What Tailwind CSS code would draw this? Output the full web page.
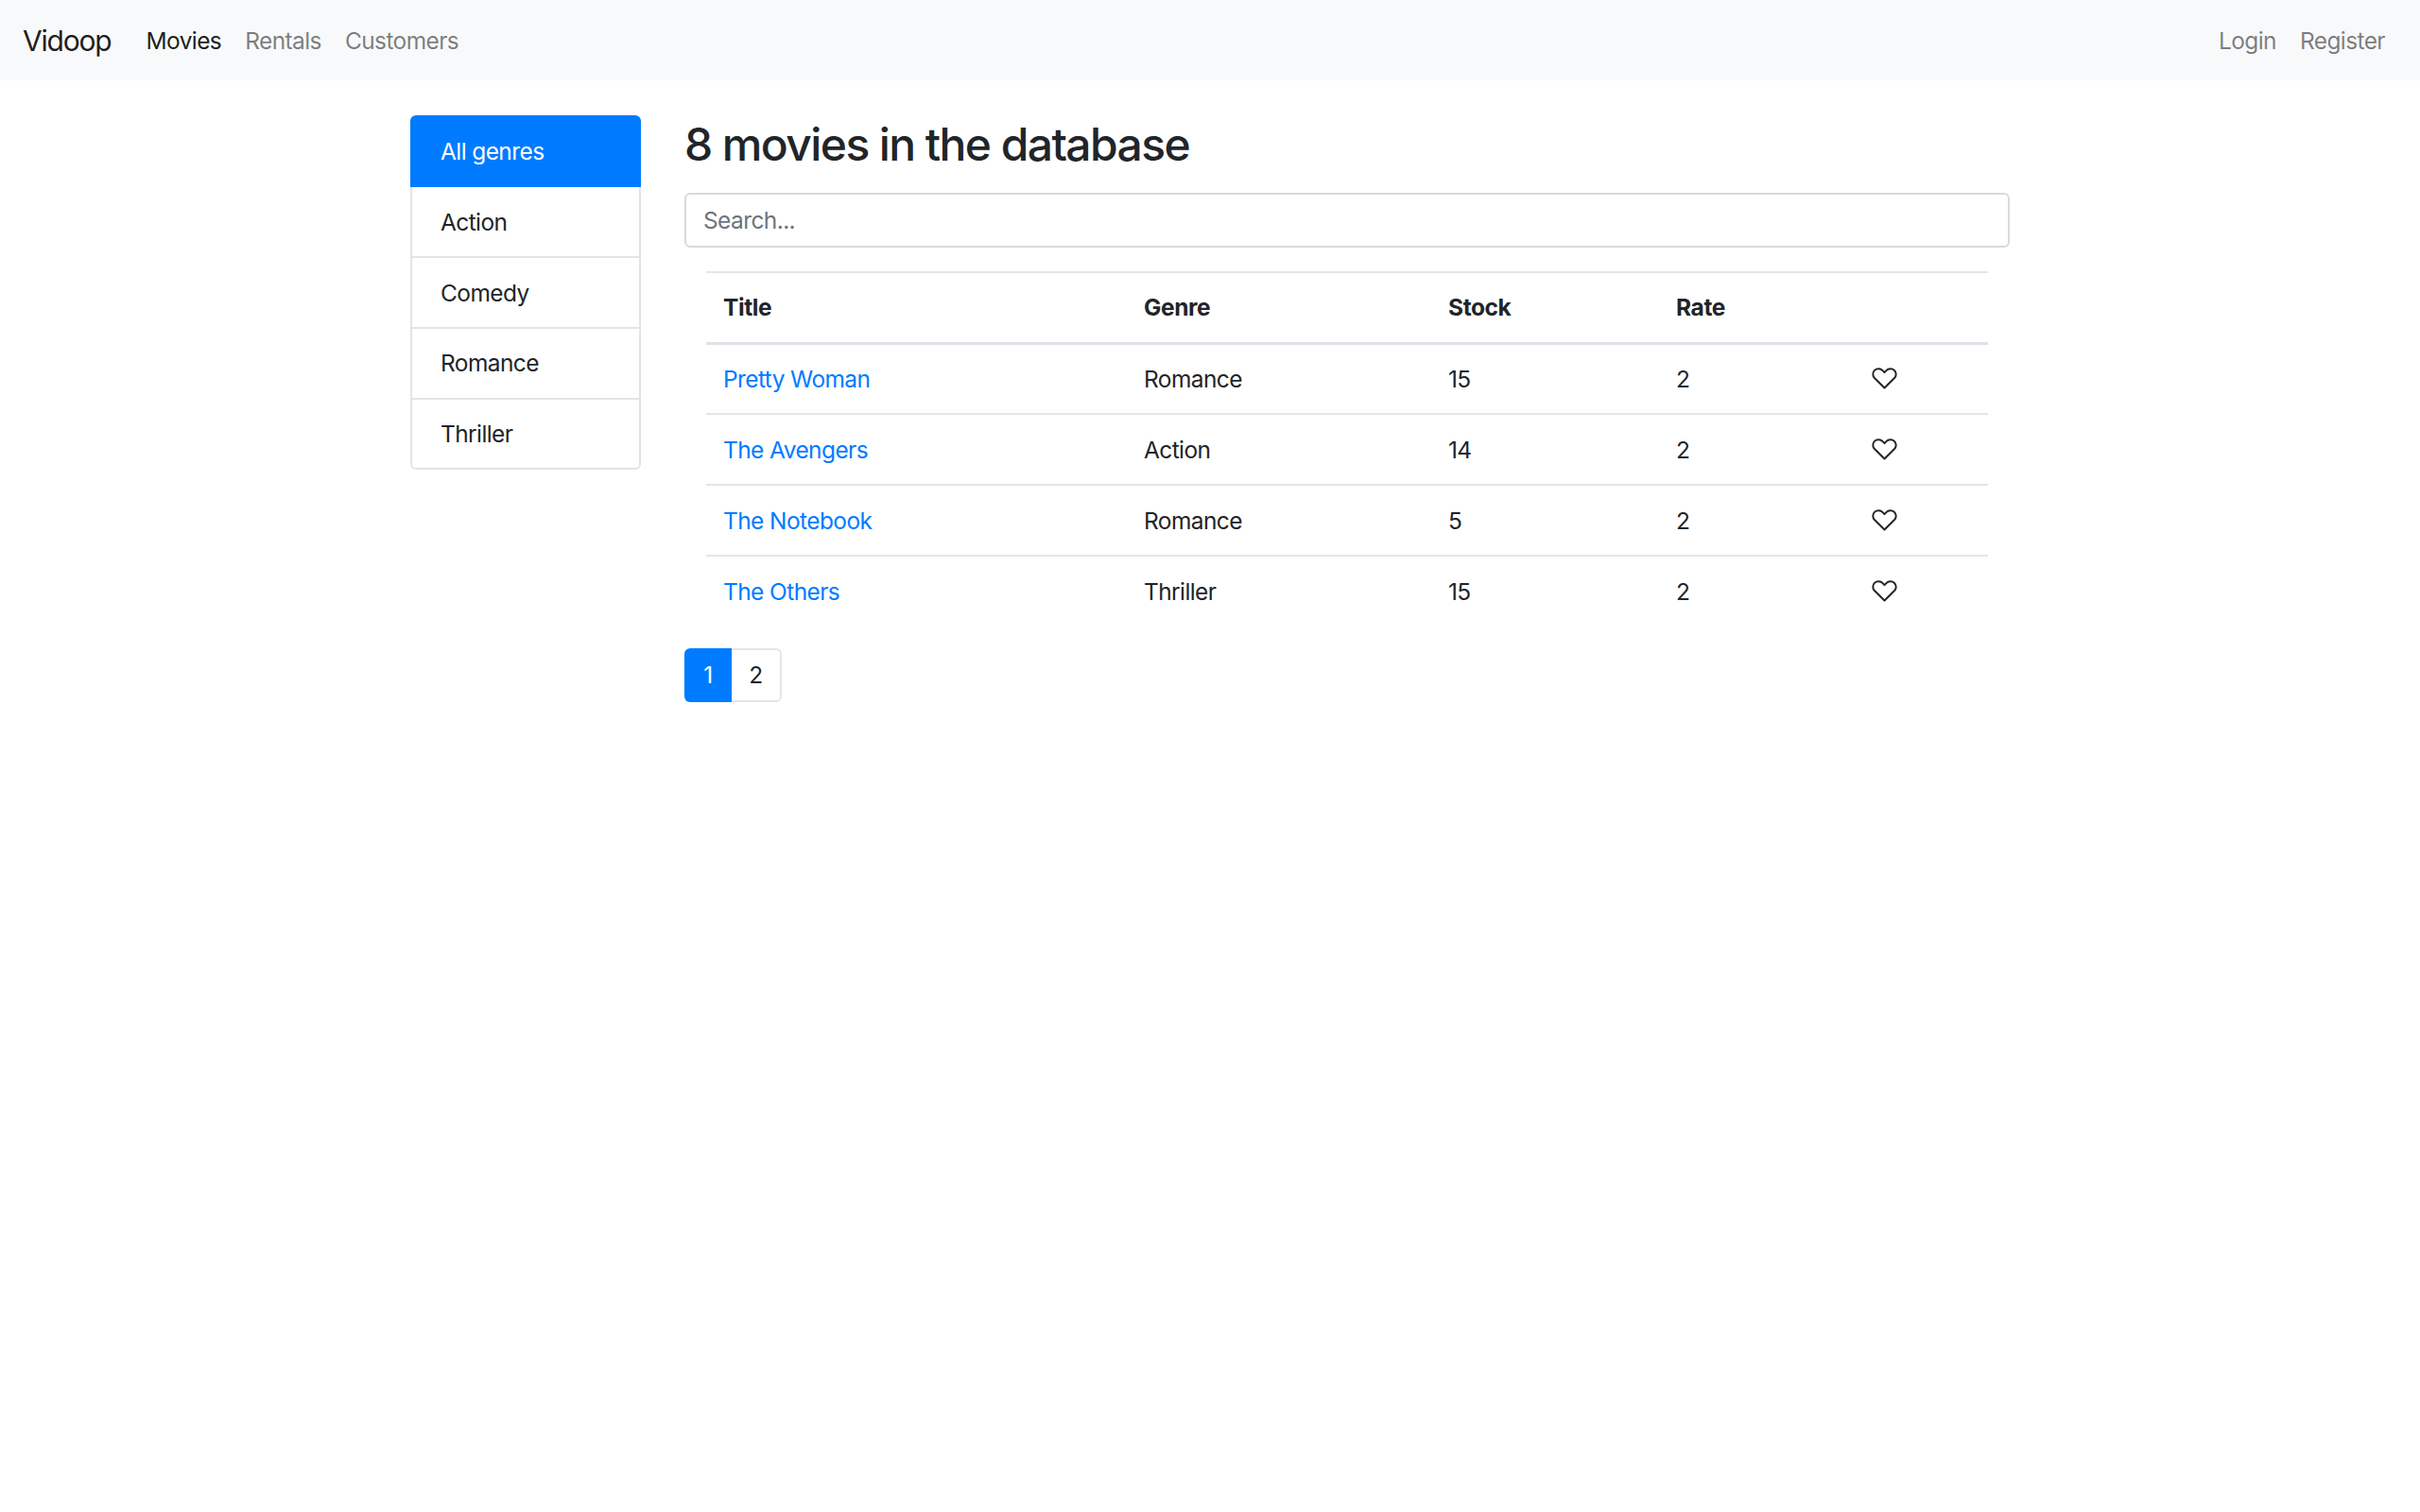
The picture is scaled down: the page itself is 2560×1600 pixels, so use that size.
<!DOCTYPE html>
<html lang="en">
<head>
    <meta charset="UTF-8">
    <title>Vidoop</title>
    <script src="https://cdn.jsdelivr.net/npm/@tailwindcss/browser@4"></script>
</head>
<body class="bg-white font-['Inter',sans-serif] text-[24.5px] tracking-[-0.6px] text-[#212529] min-h-screen">
    <!-- Navbar -->
    <nav class="h-[85px] bg-[#f8f9fa] flex items-center justify-between pl-[24px] pr-[37px] pt-[2px]">
        <div class="flex items-center">
            <a class="text-[30px] tracking-[-1.2px] text-black/90 mr-[37px]" href="#">Vidoop</a>
            <div class="flex gap-[25px]">
                <a class="text-black/90" href="#">Movies</a>
                <a class="text-black/50" href="#">Rentals</a>
                <a class="text-black/50" href="#">Customers</a>
            </div>
        </div>
        <div class="flex gap-[25px]">
            <a class="text-black/50" href="#">Login</a>
            <a class="text-black/50" href="#">Register</a>
        </div>
    </nav>

    <div class="flex items-start pl-[434px] pt-[37px]">
        <!-- Genres -->
        <ul class="w-[244px] mr-[46px] flex-none">
            <li class="h-[76px] pl-[32px] flex items-center bg-[#007bff] text-white rounded-t-[6px]">All genres</li>
            <li class="h-[75px] pl-[30px] pt-[2px] flex items-center border-x-2 border-b-2 border-[#e4e4e4]">Action</li>
            <li class="h-[75px] pl-[30px] pt-[2px] flex items-center border-x-2 border-b-2 border-[#e4e4e4]">Comedy</li>
            <li class="h-[75px] pl-[30px] flex items-center border-x-2 border-b-2 border-[#e4e4e4]">Romance</li>
            <li class="h-[74px] pl-[30px] flex items-center border-x-2 border-b-2 border-[#e4e4e4] rounded-b-[6px]">Thriller</li>
        </ul>

        <!-- Movies -->
        <div class="w-[1402px]">
            <h2 class="text-[48px] tracking-[-1.6px] font-medium leading-[62px] mb-[20px]">8 movies in the database</h2>
            <input type="text" placeholder="Search..." class="w-full h-[58px] px-[18px] rounded-[6px] border-2 border-[#d6dbe0] text-[#495057] placeholder:text-[#6c757d] outline-none mb-[25px]">

            <table class="w-[1356px] mx-[23px] table-fixed border-collapse">
                <thead>
                    <tr class="h-[75px] border-t-2 border-b-[3px] border-t-[#e3e6e9] border-b-[#dee2e6] text-left tracking-[-0.4px]">
                        <th class="w-[444px] pl-[18px] font-bold">Title</th>
                        <th class="w-[322px] pl-[19px] font-bold">Genre</th>
                        <th class="w-[241px] pl-[19px] font-bold">Stock</th>
                        <th class="w-[207px] pl-[19px] font-bold">Rate</th>
                        <th class="w-[142px]"></th>
                    </tr>
                </thead>
                <tbody>
                    <tr class="h-[75px] border-b-2 border-[#e3e6e9]">
                        <td class="pl-[18px] pt-[2px]"><a class="text-[#007bff]" href="#">Pretty Woman</a></td>
                        <td class="pl-[19px] pt-[2px]">Romance</td>
                        <td class="pl-[19px] pt-[2px]">15</td>
                        <td class="pl-[19px] pt-[2px]">2</td>
                        <td class="pl-[19px]"><svg class="w-[27px] h-[23px]" viewBox="0 0 27 23" fill="none" stroke="currentColor" stroke-width="2" stroke-linejoin="round"><path d="M13.5 21.5 3.2 11.3C.6 8.6.8 5 3 2.9 5.4.7 9.4.9 11.6 3.1l1.9 2 1.9-2c2.2-2.2 6.2-2.4 8.6-.2 2.2 2.1 2.4 5.7-.2 8.4z"/></svg></td>
                    </tr>
                    <tr class="h-[75px] border-b-2 border-[#e3e6e9]">
                        <td class="pl-[18px] pt-[2px]"><a class="text-[#007bff]" href="#">The Avengers</a></td>
                        <td class="pl-[19px] pt-[2px]">Action</td>
                        <td class="pl-[19px] pt-[2px]">14</td>
                        <td class="pl-[19px] pt-[2px]">2</td>
                        <td class="pl-[19px]"><svg class="w-[27px] h-[23px]" viewBox="0 0 27 23" fill="none" stroke="currentColor" stroke-width="2" stroke-linejoin="round"><path d="M13.5 21.5 3.2 11.3C.6 8.6.8 5 3 2.9 5.4.7 9.4.9 11.6 3.1l1.9 2 1.9-2c2.2-2.2 6.2-2.4 8.6-.2 2.2 2.1 2.4 5.7-.2 8.4z"/></svg></td>
                    </tr>
                    <tr class="h-[75px] border-b-2 border-[#e3e6e9]">
                        <td class="pl-[18px] pt-[2px]"><a class="text-[#007bff]" href="#">The Notebook</a></td>
                        <td class="pl-[19px] pt-[2px]">Romance</td>
                        <td class="pl-[19px] pt-[2px]">5</td>
                        <td class="pl-[19px] pt-[2px]">2</td>
                        <td class="pl-[19px]"><svg class="w-[27px] h-[23px]" viewBox="0 0 27 23" fill="none" stroke="currentColor" stroke-width="2" stroke-linejoin="round"><path d="M13.5 21.5 3.2 11.3C.6 8.6.8 5 3 2.9 5.4.7 9.4.9 11.6 3.1l1.9 2 1.9-2c2.2-2.2 6.2-2.4 8.6-.2 2.2 2.1 2.4 5.7-.2 8.4z"/></svg></td>
                    </tr>
                    <tr class="h-[74px]">
                        <td class="pl-[18px] pt-[2px]"><a class="text-[#007bff]" href="#">The Others</a></td>
                        <td class="pl-[19px] pt-[2px]">Thriller</td>
                        <td class="pl-[19px] pt-[2px]">15</td>
                        <td class="pl-[19px] pt-[2px]">2</td>
                        <td class="pl-[19px]"><svg class="w-[27px] h-[23px]" viewBox="0 0 27 23" fill="none" stroke="currentColor" stroke-width="2" stroke-linejoin="round"><path d="M13.5 21.5 3.2 11.3C.6 8.6.8 5 3 2.9 5.4.7 9.4.9 11.6 3.1l1.9 2 1.9-2c2.2-2.2 6.2-2.4 8.6-.2 2.2 2.1 2.4 5.7-.2 8.4z"/></svg></td>
                    </tr>
                </tbody>
            </table>

            <!-- Pagination -->
            <div class="flex mt-[24px]">
                <a class="w-[50px] h-[57px] flex items-center justify-center bg-[#007bff] text-white rounded-l-[6px]" href="#">1</a>
                <a class="w-[53px] h-[57px] flex items-center justify-center border-2 border-l-0 border-[#e3e6e9] rounded-r-[6px]" href="#">2</a>
            </div>
        </div>
    </div>
</body>
</html>
